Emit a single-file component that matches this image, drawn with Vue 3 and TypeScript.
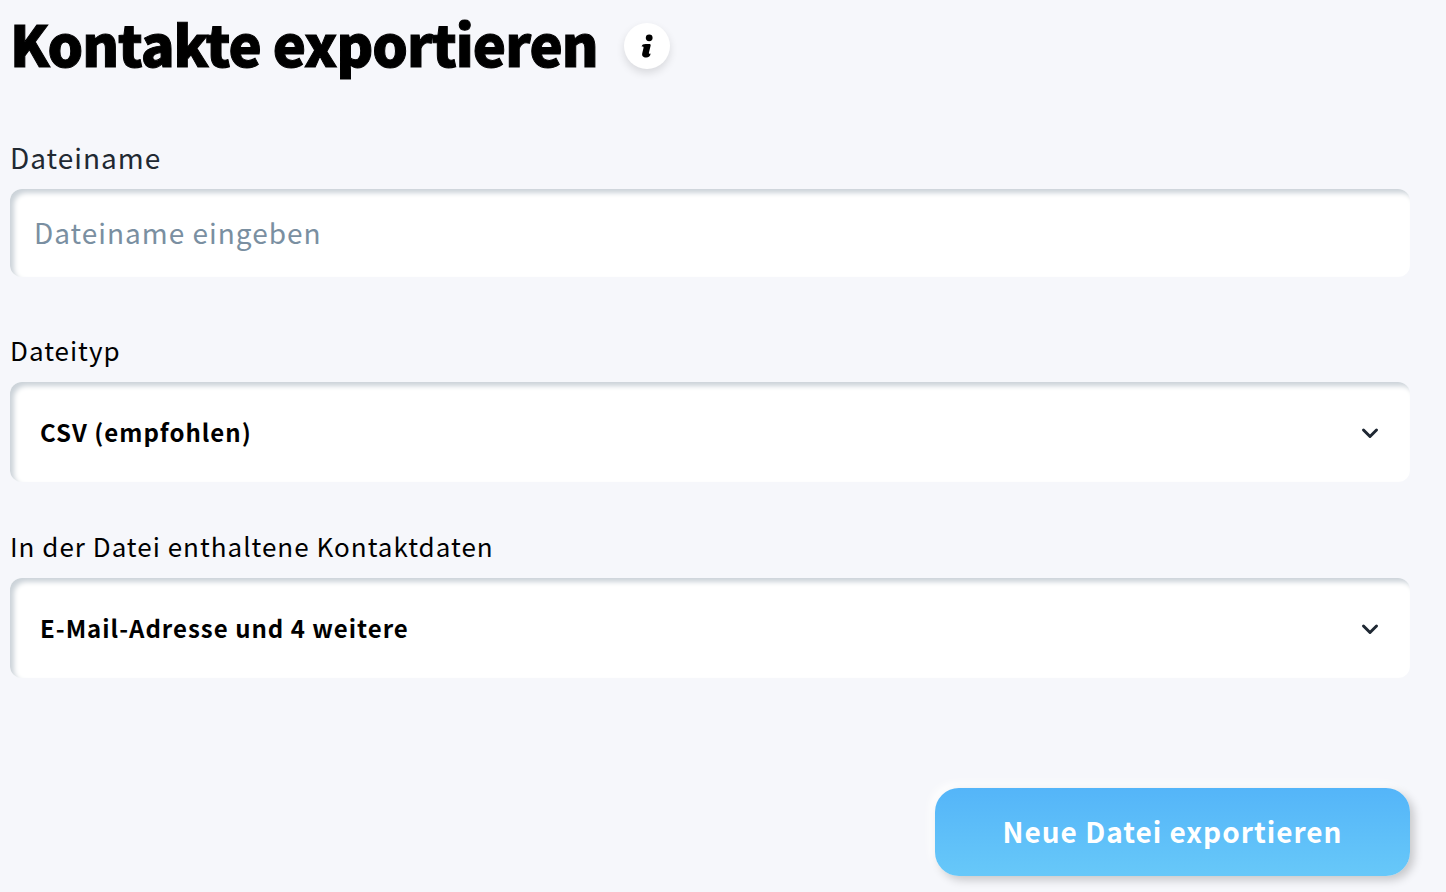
<script setup lang="ts">
import { ref } from 'vue'

const fileName = ref('')
const fileType = ref('csv')
const contactData = ref('email')
</script>

<template>
  <main class="page">
    <header class="heading">
      <h1>Kontakte exportieren</h1>
      <button class="info" type="button" aria-label="Information">
        <svg viewBox="0 0 12 24" width="12" height="24" aria-hidden="true">
          <circle cx="8.200" cy="3.800" r="3.400" />
          <path d="M.6 12.600C1 10.800 2.300 10 4.600 10h3.600c1.200 0 1.700.6 1.400 1.800l-1.700 7c-.2 1 .3 1.200 1.700.7-.2 2.700-1.900 4.100-4.400 4.100-3.200 0-4.600-1.600-3.900-4.500l1.200-5c.3-1.400-.3-1.900-1.900-1.500z" />
        </svg>
      </button>
    </header>

    <form class="form" @submit.prevent>
      <div class="field name-field">
        <label for="file-name">Dateiname</label>
        <input id="file-name" v-model="fileName" type="text" placeholder="Dateiname eingeben" />
      </div>

      <div class="field select-field">
        <label for="file-type">Dateityp</label>
        <div class="select-box">
          <select id="file-type" v-model="fileType">
            <option value="csv">CSV (empfohlen)</option>
          </select>
          <svg class="chevron" viewBox="0 0 20 14" width="20" height="14" aria-hidden="true">
            <path d="M3.500 5l6.500 6.500L16.500 5" />
          </svg>
        </div>
      </div>

      <div class="field select-field">
        <label for="contact-data">In der Datei enthaltene Kontaktdaten</label>
        <div class="select-box">
          <select id="contact-data" v-model="contactData">
            <option value="email">E-Mail-Adresse und 4 weitere</option>
          </select>
          <svg class="chevron" viewBox="0 0 20 14" width="20" height="14" aria-hidden="true">
            <path d="M3.500 5l6.500 6.500L16.500 5" />
          </svg>
        </div>
      </div>

      <button class="submit" type="submit">Neue Datei exportieren</button>
    </form>
  </main>
</template>

<style>
body {
  background: #f6f7fb;
}
</style>

<style scoped>
.page {
  padding: 0 36px 16px 10px;
  font-family: "Noto Sans CJK SC", "Noto Sans", sans-serif;
  color: #000;
}
.heading {
  display: flex;
  align-items: center;
  gap: 26px;
}
h1 {
  margin: 0;
  padding-bottom: 6px;
  font-size: 56px;
  line-height: 86px;
  font-weight: 900;
  letter-spacing: -1px;
  -webkit-text-stroke: 1px #000;
}
.info {
  display: grid;
  place-items: center;
  width: 46px;
  height: 46px;
  padding: 0;
  border: 0;
  border-radius: 50%;
  background: #fff;
  box-shadow: 0 4px 8px rgba(0, 0, 0, 0.12);
}
.form {
  display: flex;
  flex-direction: column;
  margin-top: 45px;
}
.field {
  display: flex;
  flex-direction: column;
}
label {
  margin-bottom: 12px;
  line-height: 40px;
  letter-spacing: 1px;
}
.name-field label {
  font-size: 28px;
  color: #212932;
}
input,
.select-box {
  border-radius: 12px;
  background: #fff;
  box-shadow: inset 4px 4px 5px #ccd3d9;
}
input {
  box-sizing: border-box;
  width: 100%;
  height: 88px;
  padding: 0 24px 2px;
  border: 0;
  font: inherit;
  font-size: 28px;
  letter-spacing: 1px;
}
input::placeholder {
  color: #7a8fa1;
  opacity: 1;
}
.select-field {
  margin-top: 53px;
}
.select-field + .select-field {
  margin-top: 44px;
}
.select-field label {
  font-size: 26px;
}
.select-box {
  display: grid;
  align-items: center;
}
.select-box > * {
  grid-area: 1 / 1;
}
select {
  width: 100%;
  height: 100px;
  padding: 0 80px 2px 30px;
  border: 0;
  appearance: none;
  background: transparent;
  font: inherit;
  font-size: 24px;
  font-weight: 700;
  letter-spacing: 1px;
  color: #000;
}
.chevron {
  justify-self: end;
  margin-right: 30px;
  pointer-events: none;
  fill: none;
  stroke: #1f2833;
  stroke-width: 3;
  stroke-linecap: round;
  stroke-linejoin: round;
}
.submit {
  align-self: flex-end;
  width: 475px;
  height: 88px;
  margin-top: 110px;
  padding: 0 0 2px;
  border: 0;
  border-radius: 24px;
  background: linear-gradient(#54b5f9, #67c8f9);
  box-shadow: 4px 4px 10px rgba(0, 0, 0, 0.2), -4px -4px 10px #fff;
  color: #fff;
  font: inherit;
  font-size: 28px;
  font-weight: 700;
  letter-spacing: 1px;
}
</style>
